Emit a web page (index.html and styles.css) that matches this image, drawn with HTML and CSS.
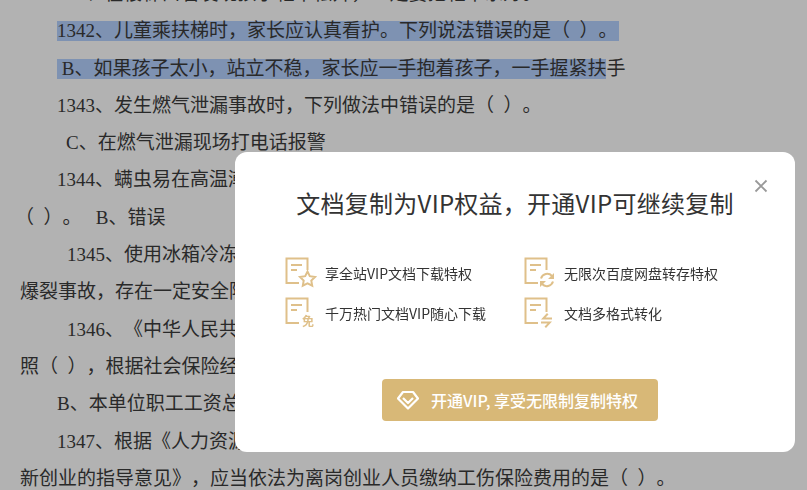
FILE: index.html
```html
<!DOCTYPE html>
<html lang="zh-CN">
<head>
    <meta charset="UTF-8">
    <title>文档复制</title>
    <link rel="stylesheet" href="styles.css">
</head>
<body>
    <div class="doc">
        <p class="line ind-1">&nbsp;&nbsp;一、在楼梯口若发现孩子鞋带松开，一定要把鞋带系好。</p>
        <p class="line ind-1"><span class="sel sel-full">1342、儿童乘扶梯时，家长应认真看护。下列说法错误的是（&nbsp;&nbsp;）。</span></p>
        <p class="line ind-1"><span class="sel">&nbsp;B、如果孩子太小，站立不稳，家长应一手抱着孩子，一手握紧扶</span>手</p>
        <p class="line ind-1">1343、发生燃气泄漏事故时，下列做法中错误的是（&nbsp;&nbsp;）。</p>
        <p class="line ind-2">C、在燃气泄漏现场打电话报警</p>
        <p class="line ind-1">1344、螨虫易在高温潮</p>
        <p class="line ind-3">（&nbsp;&nbsp;）。&nbsp;&nbsp;&nbsp;B、错误</p>
        <p class="line ind-4">1345、使用冰箱冷冻</p>
        <p class="line ind-0">爆裂事故，存在一定安全隐</p>
        <p class="line ind-4">1346、《中华人民共</p>
        <p class="line ind-0">照（&nbsp;&nbsp;），根据社会保险经</p>
        <p class="line ind-1">B、本单位职工工资总</p>
        <p class="line ind-1">1347、根据《人力资源</p>
        <p class="line ind-0">新创业的指导意见》，应当依法为离岗创业人员缴纳工伤保险费用的是（&nbsp;&nbsp;）。</p>
    </div>

    <div class="overlay"></div>

    <div class="modal">
        <button class="close" aria-label="关闭">
            <svg width="14" height="14" viewBox="0 0 14 14"><path d="M1.500 1.500l11 11M12.500 1.500l-11 11" fill="none" stroke="#999" stroke-width="1.800"/></svg>
        </button>
        <h2 class="title">文档复制为VIP权益，开通VIP可继续复制</h2>
        <div class="perks">
            <div class="perk">
                <svg class="perk-icon" width="32" height="32" viewBox="0 0 32 32">
                    <path class="doc-line" d="M14 26H1.500V1.500h21V13M6 8h11M6 13h6"/>
                    <path class="doc-line" d="M22.500 14.500l2.300 4.700 5.200.8-3.700 3.600.9 5.100-4.700-2.400-4.700 2.400.9-5.100-3.700-3.600 5.200-.8z"/>
                </svg>
                <span>享全站VIP文档下载特权</span>
            </div>
            <div class="perk">
                <svg class="perk-icon" width="32" height="32" viewBox="0 0 32 32">
                    <path class="doc-line" d="M14 26H1.500V1.500h21V13M6 8h11M6 13h6"/>
                    <path class="doc-line" d="M17 21.500a6.500 6.500 0 0 1 11-2.500M29 24.500a6.500 6.500 0 0 1-11 2.500"/>
                    <path class="doc-fill" d="M30 16v6h-6zM16 30v-6h6z"/>
                </svg>
                <span>无限次百度网盘转存特权</span>
            </div>
            <div class="perk">
                <svg class="perk-icon" width="32" height="32" viewBox="0 0 32 32">
                    <path class="doc-line" d="M14 26H1.500V1.500h21V15M6 8h11M6 13h6"/>
                    <text class="perk-glyph" x="17" y="28.500">免</text>
                </svg>
                <span>千万热门文档VIP随心下载</span>
            </div>
            <div class="perk">
                <svg class="perk-icon" width="32" height="32" viewBox="0 0 32 32">
                    <path class="doc-line" d="M14 26H1.500V1.500h21V15M6 8h11M6 13h6"/>
                    <path class="doc-fill" d="M23 16l-6 6.500h11v-2h-6.500l3-3zM22 31l6-6.500H17v2h6.500l-3 3z"/>
                </svg>
                <span>文档多格式转化</span>
            </div>
        </div>
        <button class="open-vip">
            <svg width="22" height="20" viewBox="0 0 22 20"><path d="M6 2h10l5 6.500-10 10-10-10zM6 8l5 5 5-5" fill="none" stroke="#fff" stroke-width="2.200" stroke-linejoin="round"/></svg>
            <span>开通VIP, 享受无限制复制特权</span>
        </button>
    </div>
</body>
</html>
```

FILE: styles.css
```css
*{
    box-sizing:border-box;
}
html,body{
    height:100%;
}
body{
    margin:0;
    overflow:hidden;
    background:#fff;
}
.doc{
    height:490px;
    overflow:hidden;
    color:#3c3c3c;
    font-family:"Liberation Serif","Noto Sans CJK SC",serif;
    font-size:19px;
    text-spacing-trim:space-all;
}
.line{
    margin:0;
    height:37.3px;
    line-height:37.3px;
    white-space:nowrap;
}
.line:first-child{
    margin-top:-25px;
}
.ind-0{ padding-left:20px; }
.ind-1{ padding-left:57px; }
.ind-2{ padding-left:66px; }
.ind-3{ padding-left:15px; }
.ind-4{ padding-left:67px; }
.sel{
    display:inline-block;
    height:20px;
    line-height:20px;
    background:#b5d1ff;
}
.sel-full{
    width:562px;
}
.overlay{
    position:fixed;
    top:0;
    left:0;
    right:0;
    bottom:0;
    background:rgba(0,0,0,.3);
}
.modal{
    position:fixed;
    left:235px;
    top:152px;
    width:560px;
    height:300px;
    padding-top:35px;
    background:#fff;
    border-radius:12px;
    font-family:"Noto Sans CJK SC",sans-serif;
    color:#333;
}
.close{
    position:absolute;
    top:27px;
    right:27px;
    width:14px;
    height:14px;
    padding:0;
    border:none;
    background:none;
    line-height:0;
}
.title{
    margin:0;
    font-size:24px;
    font-weight:400;
    letter-spacing:.25px;
    line-height:32px;
    text-align:center;
}
.perks{
    display:grid;
    grid-template-columns:239px 1fr;
    row-gap:8px;
    margin-top:38px;
    padding-left:50px;
}
.perk{
    display:flex;
    align-items:center;
    gap:8px;
    height:32px;
    font-size:14px;
}
.perk-icon{
    flex:none;
}
.doc-line{
    fill:none;
    stroke:#dfc08a;
    stroke-width:2;
}
.doc-fill{
    fill:#dfc08a;
}
.perk-glyph{
    fill:#dfc08a;
    font-size:12px;
    font-weight:700;
}
.open-vip{
    display:flex;
    align-items:center;
    gap:12px;
    width:276px;
    height:42px;
    margin:50px 0 0 147px;
    padding:0 0 0 15px;
    border:none;
    border-radius:4px;
    background:#d8b877;
    color:#fff;
    font-family:"Noto Sans CJK SC",sans-serif;
    font-size:16px;
    font-weight:500;
}
```
